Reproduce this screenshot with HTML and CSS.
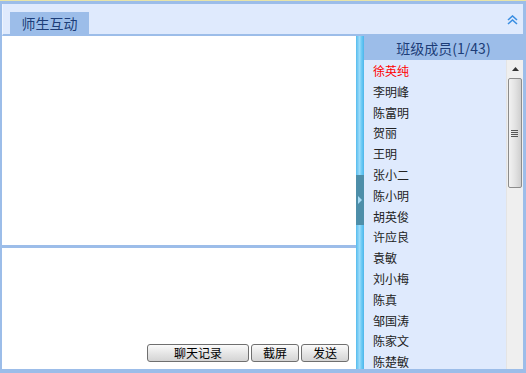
FILE: index.html
```html
<!DOCTYPE html>
<html>
<head>
<meta charset="utf-8">
<link rel="stylesheet" href="styles.css">
</head>
<body>
<div class="app">
  <div class="frame">
    <div class="header">
      <div class="tab">师生互动</div>
      <svg class="collapse" width="11" height="10" viewBox="0 0 11 10"><path d="M1 5 L5.5 1 L10 5 M1 9 L5.5 5 L10 9" fill="none" stroke="#3a8ee2" stroke-width="1.6"/></svg>
    </div>
    <div class="main">
      <div class="left">
        <div class="messages"></div>
        <div class="divider"></div>
        <div class="input">
          <div class="buttons">
            <button class="btn btn-wide">聊天记录</button>
            <button class="btn">截屏</button>
            <button class="btn">发送</button>
          </div>
        </div>
      </div>
      <div class="splitter">
        <div class="handle"><svg width="5" height="8" viewBox="0 0 5 8"><path d="M0 0 L4 4 L0 8 Z" fill="#a9dcf5"/></svg></div>
      </div>
      <div class="right">
        <div class="members-title">班级成员(1/43)</div>
        <div class="members-body">
          <ul class="members">
            <li class="me">徐英纯</li>
            <li>李明峰</li>
            <li>陈富明</li>
            <li>贺丽</li>
            <li>王明</li>
            <li>张小二</li>
            <li>陈小明</li>
            <li>胡英俊</li>
            <li>许应良</li>
            <li>袁敏</li>
            <li>刘小梅</li>
            <li>陈真</li>
            <li>邹国涛</li>
            <li>陈家文</li>
            <li>陈楚敏</li>
          </ul>
          <div class="scrollbar">
            <div class="arrow-up"><svg width="7" height="4" viewBox="0 0 7 4"><path d="M0 4 L3.5 0 L7 4 Z" fill="#333"/></svg></div>
            <div class="thumb"><div class="grip"><i></i><i></i><i></i><i></i></div></div>
          </div>
        </div>
      </div>
    </div>
  </div>
</div>
</body>
</html>
```

FILE: styles.css
```css
* { box-sizing: border-box; }
html, body { margin: 0; padding: 0; background: #ffffff; }
body { font-family: "Noto Sans CJK SC", "DejaVu Sans", sans-serif; }

.app {
  width: 526px;
  height: 373px;
  border-top: 1px solid #e8e4a8;
}
.frame {
  height: 372px;
  border-style: solid;
  border-color: #9cbde9;
  border-width: 3px 3px 4px 2px;
  display: flex;
  flex-direction: column;
}

.header {
  height: 32px;
  flex: none;
  background: #dfeafd;
  border-bottom: 2px solid #9cbde9;
  display: flex;
  align-items: flex-end;
  justify-content: space-between;
  padding-left: 7px;
  border-left: 1px solid #eef4fe;
}
.tab {
  width: 79px;
  height: 22px;
  background: #9cbde9;
  color: #1d3d78;
  font-size: 14px;
  line-height: 22px;
  text-align: center;
}
.collapse {
  align-self: center;
  margin-right: 5px;
  margin-top: 2px;
}

.main {
  flex: 1;
  display: flex;
  min-height: 0;
}

.left {
  width: 354px;
  display: flex;
  flex-direction: column;
  background: #ffffff;
}
.messages { height: 209px; }
.divider { height: 3px; background: #9cbde9; }
.input {
  flex: 1;
  display: flex;
  align-items: flex-end;
  justify-content: flex-end;
  padding: 0 7px 7px 0;
}
.buttons { display: flex; gap: 2px; }
.btn {
  height: 18px;
  width: 48px;
  padding: 0;
  border: 1px solid #6f6f6f;
  border-radius: 3px;
  background: linear-gradient(#fbfbfb, #e6e6e6 50%, #d4d4d4);
  font-family: "Noto Sans CJK SC", sans-serif;
  font-size: 12px;
  line-height: 16px;
  color: #000;
}
.btn-wide { width: 102px; }

.splitter {
  width: 8px;
  flex: none;
  background: linear-gradient(90deg, #55bcee, #9ddcfa 45%, #6ccaf5 70%, #4cb6ea);
  display: flex;
  flex-direction: column;
  justify-content: center;
}
.handle {
  height: 50px;
  margin-top: -6px;
  background: #4d8ea9;
  display: flex;
  align-items: center;
  justify-content: center;
}

.right {
  flex: 1;
  display: flex;
  flex-direction: column;
  background: #dfeafd;
}
.members-title {
  height: 24px;
  background: #9cbde9;
  color: #1d3d78;
  font-size: 14px;
  line-height: 24px;
  text-align: center;
}
.members-body {
  flex: 1;
  display: flex;
  min-height: 0;
  overflow: hidden;
}
.members {
  flex: 1;
  list-style: none;
  margin: 0;
  padding: 1px 0 0 9px;
  overflow: hidden;
}
.members li {
  height: 20.8px;
  line-height: 20.8px;
  font-size: 12px;
  color: #222;
  white-space: nowrap;
}
.members li.me { color: #ff0000; }

.scrollbar {
  width: 17px;
  flex: none;
  background: #efefef;
  border-left: 1px solid #e4e4e4;
  padding: 1px 1px 0 1px;
}
.arrow-up {
  height: 16px;
  display: flex;
  align-items: center;
  justify-content: center;
}
.thumb {
  margin-top: 1px;
  height: 110px;
  border: 1px solid #8c8c8c;
  border-radius: 2px;
  background: linear-gradient(90deg, #f2f2f2, #e3e3e3 50%, #cfcfcf);
  display: flex;
  align-items: center;
  justify-content: center;
}
.grip { display: flex; flex-direction: column; gap: 1px; margin-left: -2px; }
.grip i { display: block; width: 7px; height: 1px; background: #555; }
```
